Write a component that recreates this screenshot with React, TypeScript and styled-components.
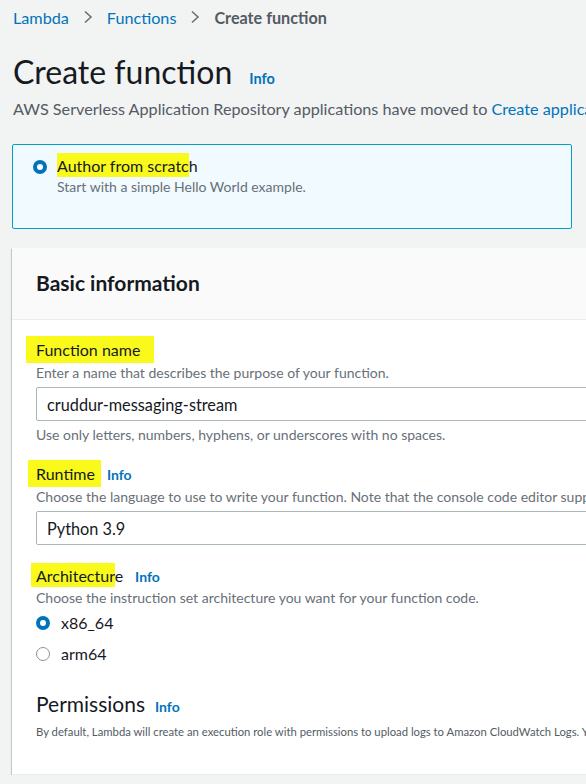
import React from "react";
import styled, { createGlobalStyle } from "styled-components";

const GlobalStyle = createGlobalStyle`
  html, body { margin: 0; padding: 0; }
  body {
    background: #f2f3f3;
    font-family: Lato, "Noto Sans", sans-serif;
    color: #16191f;
    overflow: hidden;
  }
`;

const Page = styled.div`
  width: 1000px;
  padding: 6px 0 0 13px;
  box-sizing: border-box;
`;

const Breadcrumbs = styled.nav`
  display: flex;
  align-items: center;
  gap: 14px;
  height: 22px;
  font-size: 16.2px;
`;

const Crumb = styled.a<{ $current?: boolean }>`
  color: ${(p) => (p.$current ? "#545b64" : "#0073bb")};
  font-weight: ${(p) => (p.$current ? 700 : 400)};
  text-decoration: none;
`;

const Chevron = () => (
  <svg width="10" height="14" viewBox="0 0 10 14" aria-hidden>
    <polyline points="2,1.5 8,7 2,12.5" fill="none" stroke="#687078" strokeWidth="1.6" />
  </svg>
);

const TitleRow = styled.div`
  display: flex;
  align-items: baseline;
  gap: 17px;
  margin-top: 26px;
`;

const Title = styled.h1`
  margin: 0;
  font-size: 32px;
  font-weight: 400;
  line-height: 36px;
  color: #16191f;
`;

const Info = styled.a<{ $size?: number }>`
  color: #0073bb;
  font-weight: 700;
  font-size: ${(p) => p.$size ?? 14}px;
  text-decoration: none;
`;

const Subtitle = styled.p`
  margin: 8px 0 0;
  font-size: 16.2px;
  line-height: 22px;
  color: #545b64;
  white-space: nowrap;
`;

const Link = styled.a`
  color: #0073bb;
  text-decoration: none;
`;

const Tile = styled.div`
  width: 560px;
  height: 85px;
  box-sizing: border-box;
  margin: 24px 0 0 -1px;
  border: 1px solid #00a1c9;
  border-radius: 2px;
  background: #f1faff;
  display: flex;
  align-items: flex-start;
  gap: 10px;
  padding: 11px 20px;
`;

const Radio = styled.span<{ $checked?: boolean }>`
  flex: none;
  width: 14px;
  height: 14px;
  border-radius: 50%;
  box-sizing: border-box;
  background: #fff;
  border: ${(p) => (p.$checked ? "4px solid #0073bb" : "1.5px solid #879596")};
`;

const TileRadio = styled(Radio)`
  margin-top: 4px;
`;

const TileText = styled.div`
  display: flex;
  flex-direction: column;
  gap: 1px;
`;

const TileTitle = styled.div`
  font-size: 16px;
  line-height: 20px;
  color: #16191f;
`;

const Desc = styled.div`
  font-size: 14px;
  line-height: 20px;
  color: #687078;
  white-space: nowrap;
`;

const Mark = styled.span<{ $l?: number; $r?: number }>`
  background: #f9f91c;
  padding: 3px ${(p) => p.$r ?? 0}px 2px ${(p) => p.$l ?? 0}px;
  margin: 0 -${(p) => p.$r ?? 0}px 0 -${(p) => p.$l ?? 0}px;
`;

const Panel = styled.section`
  margin-top: 19px;
  margin-left: -1px;
  background: #fff;
  box-shadow: 0 1px 1px 0 rgba(0, 28, 36, 0.3), -1px 1px 1px 0 rgba(0, 28, 36, 0.15);
`;

const PanelHeader = styled.header`
  height: 72px;
  box-sizing: border-box;
  background: #fafafa;
  border-bottom: 1px solid #eaeded;
  display: flex;
  align-items: center;
  padding: 0 24px;
`;

const PanelTitle = styled.h2`
  margin: 0 0 2px;
  font-size: 21px;
  font-weight: 700;
  color: #16191f;
`;

const PanelBody = styled.div`
  padding: 16px 24px 34px;
  display: flex;
  flex-direction: column;
  border-bottom: 1px solid #eaeded;
`;

const Field = styled.div<{ $top?: number }>`
  display: flex;
  flex-direction: column;
  margin-top: ${(p) => p.$top ?? 0}px;
`;

const LabelRow = styled.div`
  display: flex;
  align-items: baseline;
  gap: 12px;
  font-size: 16px;
  line-height: 22px;
  color: #16191f;
`;

const Input = styled.div`
  height: 34px;
  box-sizing: border-box;
  margin-top: 4px;
  border: 1px solid #aab7b8;
  border-radius: 2px;
  background: #fff;
  display: flex;
  align-items: center;
  padding: 0 10px;
  font-size: 16.3px;
  color: #16191f;
`;

const Hint = styled.div`
  margin-top: 4px;
  font-size: 14px;
  line-height: 20px;
  color: #687078;
`;

const RadioGroup = styled.div`
  display: flex;
  flex-direction: column;
  gap: 11px;
  margin-top: 5px;
`;

const RadioRow = styled.label`
  display: flex;
  align-items: center;
  gap: 11px;
  font-size: 16px;
  line-height: 20px;
  color: #16191f;
`;

const Section = styled.div`
  margin-top: 26px;
  display: flex;
  flex-direction: column;
  gap: 3px;
`;

const SectionTitle = styled.div`
  display: flex;
  align-items: baseline;
  gap: 10px;
  font-size: 21px;
  line-height: 28px;
  color: #16191f;
`;

const SmallText = styled.div`
  font-size: 11.3px;
  line-height: 16px;
  color: #545b64;
  white-space: nowrap;
`;

export default function App() {
  return (
    <Page>
      <GlobalStyle />
      <Breadcrumbs>
        <Crumb>Lambda</Crumb>
        <Chevron />
        <Crumb>Functions</Crumb>
        <Chevron />
        <Crumb $current>Create function</Crumb>
      </Breadcrumbs>
      <TitleRow>
        <Title>Create function</Title>
        <Info $size={14.5}>Info</Info>
      </TitleRow>
      <Subtitle>
        AWS Serverless Application Repository applications have moved to <Link>Create application</Link>.
      </Subtitle>

      <Tile>
        <TileRadio $checked />
        <TileText>
          <TileTitle>
            <Mark>Author from scratc</Mark>h
          </TileTitle>
          <Desc>Start with a simple Hello World example.</Desc>
        </TileText>
      </Tile>

      <Panel>
        <PanelHeader>
          <PanelTitle>Basic information</PanelTitle>
        </PanelHeader>
        <PanelBody>
          <Field>
            <LabelRow>
              <Mark $l={10} $r={14}>Function name</Mark>
            </LabelRow>
            <Desc>Enter a name that describes the purpose of your function.</Desc>
            <Input>cruddur-messaging-stream</Input>
            <Hint>Use only letters, numbers, hyphens, or underscores with no spaces.</Hint>
          </Field>
          <Field $top={15}>
            <LabelRow>
              <Mark $l={8} $r={6}>Runtime</Mark>
              <Info $size={14}>Info</Info>
            </LabelRow>
            <Desc>
              Choose the language to use to write your function. Note that the console code editor supports only Node.js, Python, and Ruby.
            </Desc>
            <Input>Python 3.9</Input>
          </Field>
          <Field $top={20}>
            <LabelRow>
              <span>
                <Mark $l={5}>Architectur</Mark>e
              </span>
              <Info $size={14}>Info</Info>
            </LabelRow>
            <Desc>Choose the instruction set architecture you want for your function code.</Desc>
            <RadioGroup>
              <RadioRow>
                <Radio $checked />
                x86_64
              </RadioRow>
              <RadioRow>
                <Radio />
                arm64
              </RadioRow>
            </RadioGroup>
            <Section>
              <SectionTitle>
                Permissions <Info $size={14}>Info</Info>
              </SectionTitle>
              <SmallText>
                By default, Lambda will create an execution role with permissions to upload logs to Amazon CloudWatch Logs. You can customize this default role later when adding triggers.
              </SmallText>
            </Section>
          </Field>
        </PanelBody>
      </Panel>
    </Page>
  );
}
